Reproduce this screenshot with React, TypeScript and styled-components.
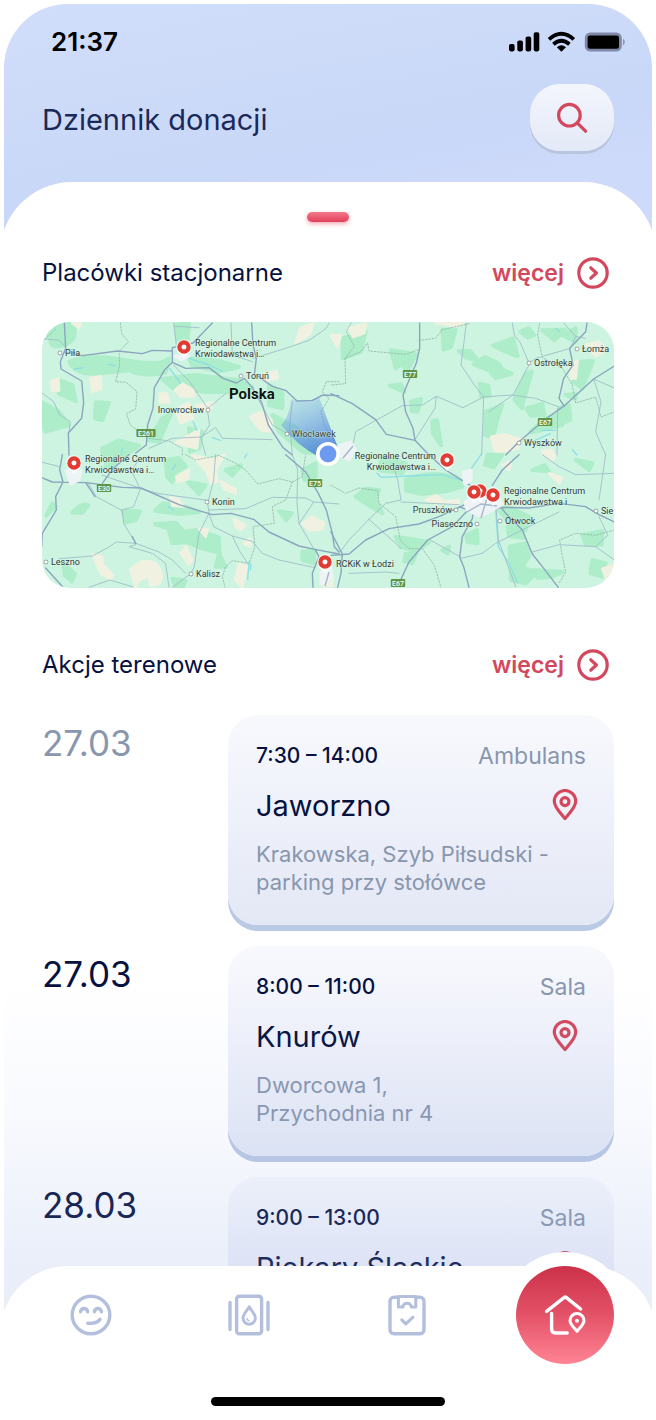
import React from "react";
import styled, { createGlobalStyle, css } from "styled-components";

const color = {
  navy: "#06113f",
  title: "#1a2958",
  muted: "#8896ae",
  red: "#d3485d",
  icon: "#b3bfdc",
};

const GlobalStyle = createGlobalStyle`
  *, *::before, *::after { box-sizing: border-box; }
  body {
    margin: 0;
    background: #fff;
    color: ${color.navy};
    font-family: Inter, "Open Sans", sans-serif;
  }
  h1, h2, h3, p, ul { margin: 0; padding: 0; font-weight: 400; }
  ul { list-style: none; }
  button { border: 0; padding: 0; font: inherit; cursor: pointer; background: none; }
  a { color: inherit; text-decoration: none; }
`;

const Frame = styled.div`
  position: relative;
  display: flex;
  flex-direction: column;
  height: calc(100vh - 4px);
  margin: 4px 4px 0;
  overflow: hidden;
  border-radius: 64px 64px 0 0;
  background: linear-gradient(170deg, #d0defb 0, #cddbf9 100px, #c9d7f8 210px, #cddafa 260px);
`;

const StatusBar = styled.div`
  display: flex;
  flex: none;
  align-items: center;
  justify-content: space-between;
  height: 76px;
  padding: 0 26px 0 47px;
`;

const Clock = styled.time`
  color: #000;
  font-size: 26px;
  font-weight: 600;
  line-height: 32px;
`;

const StatusIcons = styled.svg`
  display: block;
  width: 118px;
  height: 24px;
`;

const Header = styled.header`
  display: flex;
  flex: none;
  align-items: flex-start;
  justify-content: space-between;
  height: 102px;
  padding: 4px 38px 0;
`;

const PageTitle = styled.h1`
  color: ${color.title};
  font-size: 29px;
  line-height: 72px;
`;

const SearchButton = styled.button`
  display: grid;
  place-items: center;
  width: 84px;
  height: 67px;
  border-radius: 30px;
  background: linear-gradient(#f4f6fd, #e3e9f7);
  box-shadow: 0 3px 0 #b9c5de;
`;

const Sheet = styled.main`
  position: relative;
  flex: 1;
  min-height: 0;
  margin: 0 -4px;
  overflow: hidden;
  border-radius: 72px 72px 0 0;
  background: #fff;
`;

const Scroller = styled.div`
  display: flex;
  flex-direction: column;
  height: 100%;
  padding: 30px 42px 154px;
  overflow-y: auto;
  scrollbar-width: none;
`;

const Fade = styled.div`
  position: absolute;
  right: 0;
  bottom: 0;
  left: 0;
  height: 440px;
  pointer-events: none;
  background: linear-gradient(rgba(150, 175, 230, 0), rgba(150, 175, 230, 0.07) 32%, rgba(140, 165, 225, 0.19) 66%);
`;

const Handle = styled.div`
  flex: none;
  align-self: center;
  width: 42px;
  height: 10px;
  border-radius: 5px;
  background: linear-gradient(#f5788a, #e0405a);
  box-shadow: 0 2px 4px rgba(238, 90, 112, 0.5);
`;

const SectionHead = styled.div<{ $gap: number }>`
  display: flex;
  flex: none;
  align-items: center;
  justify-content: space-between;
  height: 36px;
  margin-top: ${({ $gap }) => $gap}px;
  padding-right: 5px;
`;

const SectionTitle = styled.h2`
  font-size: 24px;
  line-height: 36px;
`;

const MoreLink = styled.a`
  display: flex;
  gap: 13px;
  align-items: center;
  color: ${color.red};
  font-size: 23px;
  font-weight: 600;
  line-height: 36px;
`;

const MapCard = styled.div`
  flex: none;
  height: 266px;
  margin-top: 31px;
  overflow: hidden;
  border-radius: 28px;

  svg { display: block; width: 100%; height: 100%; }
`;

const Agenda = styled.ul`
  display: flex;
  flex-direction: column;
  gap: 21px;
  margin-top: 32px;
`;

const AgendaRow = styled.li`
  display: grid;
  grid-template-columns: 186px 1fr;
`;

const DateLabel = styled.time<{ $past?: boolean }>`
  color: ${({ $past }) => ($past ? color.muted : color.navy)};
  font-size: 35px;
  line-height: 56px;
`;

const Card = styled.article`
  height: 210px;
  padding: 27px 28px 0;
  border-radius: 30px;
  background: linear-gradient(#f8f9fd, #eef0fa 50%, #e3e8f5);
  box-shadow: 0 6px 0 #bac9e4;
`;

const CardRow = styled.div`
  display: flex;
  align-items: center;
  justify-content: space-between;
`;

const Hours = styled.span`
  font-size: 21px;
  font-weight: 500;
  line-height: 28px;
`;

const Kind = styled.span`
  color: ${color.muted};
  font-size: 23px;
  line-height: 28px;
`;

const Place = styled.h3`
  margin: 17px 0 15px;
  font-size: 29px;
  line-height: 38px;
`;

const PinButton = styled.button`
  display: grid;
  place-items: center;
  width: 42px;
  height: 38px;
`;

const Address = styled.p`
  color: ${color.muted};
  font-size: 22px;
  line-height: 28px;
  white-space: pre-line;
`;

const TabBar = styled.nav`
  position: absolute;
  right: -4px;
  bottom: 0;
  left: -4px;
  height: 154px;
  border-radius: 68px 68px 0 0;
  background: #fff;
`;

const Tabs = styled.ul`
  display: grid;
  grid-template-columns: repeat(4, 1fr);
  padding: 0 12px;
`;

const TabItem = styled.li`
  display: grid;
  place-items: center;
  height: 98px;
`;

const Tab = styled.button<{ $active?: boolean }>`
  display: grid;
  place-items: center;
  width: 98px;
  height: 98px;
  border-radius: 50%;
  color: ${color.icon};
  ${({ $active }) =>
    $active &&
    css`
      color: #fff;
      background: linear-gradient(#cb3148, #e45268 50%, #ff8493);
      box-shadow: 0 0 0 14px #fff;
    `}
`;

const HomeIndicator = styled.div`
  width: 234px;
  height: 9px;
  margin: 33px auto 0;
  border-radius: 5px;
  background: #000;
`;

const PhoneStatus = () => (
  <StatusIcons viewBox="0 0 118 24" aria-label="Zasięg, Wi-Fi, bateria" role="img">
    <rect x="1" y="14" width="5.6" height="7.4" rx="1.8" />
    <rect x="9.3" y="10.5" width="5.6" height="10.9" rx="1.8" />
    <rect x="17.6" y="6.4" width="5.6" height="15" rx="1.8" />
    <rect x="25.7" y="2.2" width="5.6" height="19.2" rx="1.8" />
    <g fill="none" stroke="#000" strokeWidth="3.8">
      <path d="M41 9.3 Q53.4 -1.7 65.8 9.3" />
      <path d="M45.4 14.2 Q53.4 7.4 61.4 14.2" />
    </g>
    <path d="M48.8 17.2 Q53.4 13.2 58 17.2 L53.4 21.8 Z" />
    <rect x="76.8" y="2.6" width="37" height="19" rx="5.4" fill="#7f88a6" />
    <rect x="79.6" y="5.4" width="31.4" height="13.4" rx="2.4" />
    <path d="M115.2 8.8 Q118.2 12 115.2 15.4 Z" fill="#7c85a3" />
  </StatusIcons>
);

const SearchIcon = () => (
  <svg width="34" height="34" viewBox="0 0 34 34" fill="none" stroke={color.red} strokeWidth="3.2" strokeLinecap="round" aria-hidden="true">
    <circle cx="14.4" cy="14.2" r="10.8" />
    <path d="M22.4 22.2 L30.6 30.2" />
  </svg>
);

const MoreIcon = () => (
  <svg width="32" height="32" viewBox="0 0 32 32" fill="none" stroke={color.red} strokeWidth="3.2" strokeLinecap="round" strokeLinejoin="round" aria-hidden="true">
    <circle cx="16" cy="16" r="14.2" />
    <path d="M13.8 10.8 L19.4 16 L13.8 21.2" />
  </svg>
);

const PinIcon = () => (
  <svg width="26" height="32" viewBox="0 0 26 32" fill="none" stroke={color.red} strokeWidth="3.2" strokeLinejoin="round" aria-hidden="true">
    <path d="M13 29.6 C9.4 25 2.3 18.4 2.3 12.2 A10.7 10.7 0 0 1 23.7 12.2 C23.7 18.4 16.6 25 13 29.6 Z" />
    <circle cx="13" cy="12.6" r="4" />
  </svg>
);

const tabIconProps = {
  width: 44,
  height: 44,
  viewBox: "0 0 44 44",
  fill: "none",
  stroke: "currentColor",
  strokeWidth: 3.4,
  strokeLinecap: "round" as const,
  strokeLinejoin: "round" as const,
  "aria-hidden": true,
};

const SmileIcon = () => (
  <svg {...tabIconProps}>
    <circle cx="22" cy="22" r="18.8" />
    <path d="M11.6 18.8 C11.6 14.4 18.6 14.4 18.6 18.8 M25.4 18.8 C25.4 14.4 32.4 14.4 32.4 18.8" />
    <path d="M18.8 30.2 C23.8 30.8 28.4 29.8 31 26.4" />
  </svg>
);

const DonationIcon = () => (
  <svg {...tabIconProps}>
    <rect x="9.6" y="3.2" width="25" height="37.6" rx="2.8" />
    <path d="M3 9.4 V36.6 M41 9.4 V36.6" />
    <path d="M22.2 13.8 C20.4 17 16 21 16 25 A6.2 6.2 0 0 0 28.4 25 C28.4 21 24 17 22.2 13.8 Z" strokeWidth="2.9" />
    <path d="M19.9 25.4 Q20.2 27.4 22 27.7" strokeWidth="1.4" />
  </svg>
);

const ChecklistIcon = () => (
  <svg {...tabIconProps}>
    <rect x="5" y="4.2" width="34" height="36.6" rx="4" />
    <path d="M13.4 3.4 H30.8 V14 H26.2 C26.2 9 18 9 18 14 H13.4 Z" fill="#fff" strokeWidth="3" />
    <path d="M16.8 26.8 L20.8 30.8 L28 24.2" strokeWidth="3.1" />
  </svg>
);

const HomePinIcon = () => (
  <svg {...tabIconProps}>
    <path d="M3.6 18.4 L21 4.6 Q22.2 3.6 23.4 4.6 L37.6 16" />
    <path d="M8.6 20.4 V36 Q8.6 40 12.6 40 H24.2" />
    <path d="M34 38.4 C32 35.6 27 31.8 27 27.6 A7 7 0 0 1 41 27.6 C41 31.8 36 35.6 34 38.4 Z" strokeWidth="3" />
    <circle cx="34" cy="27.8" r="2" fill="currentColor" stroke="none" />
  </svg>
);

/* The terrain is drawn in four tiles at three times the map's scale. */
type Tile = {
  at: [number, number];
  forest: string;
  sand: string;
  water?: string;
  border: string;
  minor: string;
  major: string;
};

const tiles: Tile[] = [
  {
    at: [-6, -21],
    forest:
      "M20 40 Q60 20 110 24 L104 70 Q80 100 40 92 Z M90 140 Q150 118 220 130 L300 142 Q370 150 390 130 L380 172 Q320 188 270 166 L170 176 Q110 180 90 140 Z M62 196 L100 210 L110 258 L60 236 Z M6 260 L60 290 L90 330 L20 350 L6 320 Z M170 262 L210 264 L190 316 L168 310 Z M410 30 L450 24 L444 96 L416 84 Z M370 192 L470 180 L550 190 L600 196 L640 216 L600 232 L500 230 L400 218 Z M450 130 L540 138 L600 156 L540 170 L460 152 Z M690 210 L730 230 L730 280 L690 270 Z M700 300 L760 330 L830 380 L870 420 L790 410 L720 350 Z M370 310 L396 296 L360 380 L330 376 Z M190 400 L240 376 L300 392 L262 420 L190 420 Z M450 340 L490 350 L480 400 L452 410 Z",
    sand:
      "M36 200 L58 192 L60 226 L40 228 Z M154 190 L184 184 L186 222 L160 230 Z M362 236 L384 236 L390 262 L364 262 Z M408 226 L430 206 L462 224 L466 244 L426 244 Z M410 284 L450 262 L462 310 L424 324 Z M470 272 L522 262 L510 290 Z M634 306 L668 290 L698 316 L692 350 L664 344 Z M670 180 L712 168 L716 190 L680 196 Z M784 40 L822 26 L814 56 L770 84 Z M410 384 L480 344 L474 400 Z M100 24 L126 24 L120 40 Z",
    water: "M106 162 L132 158 M208 148 L228 152 M392 160 L424 204 M450 130 L510 150 L550 168 M462 320 L474 346 M250 400 L246 420 M520 368 L544 376",
    border:
      "M244 24 L248 56 L268 80 L240 110 L242 150 L230 200 L262 202 L294 230 L290 282 L262 296 L274 330 L300 350 L330 370 L390 378 L430 400 L430 420 M900 200 L862 200 L850 230 L870 250 L846 290 L856 330 L894 390 M10 80 L50 42",
    minor:
      "M6 70 L60 76 L80 96 M6 232 L44 260 L62 300 L94 320 L90 350 M404 24 L412 90 M406 34 L480 38 M576 24 L580 120 L640 140 M404 150 L452 200 L506 280 M506 290 L512 330 L486 370 L500 420 M506 280 L560 236 M486 366 L400 370 L330 400 M486 366 L530 338 L550 370 L700 374 M642 130 L740 100 L810 76 L862 40 L870 24 M760 260 L752 330 L760 420 M640 220 L700 330 L745 356",
    major:
      "M76 24 L80 100 L64 140 L66 162 L128 198 L134 262 L128 310 L88 354 L90 420 M78 112 L130 122 L236 108 L310 116 L340 106 L398 108 M520 24 L462 84 L400 98 L400 142 L440 160 L510 158 L552 190 L592 204 L616 190 L640 218 L668 262 L688 330 L732 398 L760 420 M400 142 L376 166 L346 218 L342 280 L326 330 L322 390 L290 414 M638 24 L642 90 L652 130 L646 180 M652 180 L700 214 L740 226 L774 258 L820 256 L852 240 L900 242",
  },
  {
    at: [864, -21],
    forest:
      "M40 70 L110 50 L96 110 L42 130 Z M186 106 L262 118 L232 172 L220 146 L200 160 Z M340 44 L380 44 L366 96 L344 104 Z M390 108 L424 108 L446 136 L410 128 Z M434 148 L468 126 L510 146 L520 164 L548 176 L500 190 L480 166 Z M492 92 L552 70 L566 124 L530 110 Z M574 50 L598 40 L616 60 L596 68 Z M640 46 L710 44 L676 76 Z M452 206 L478 212 L482 242 L456 244 Z M590 176 L608 170 L578 280 L556 254 Z M182 212 L216 208 L226 230 Z M246 260 L276 252 L266 290 L248 288 Z M310 318 L324 316 L336 390 L312 356 Z M470 290 L520 270 L506 310 L492 366 L468 360 Z M592 280 L640 266 L646 300 L606 302 Z M604 350 L650 310 L714 290 L700 330 L610 352 Z M732 200 L748 140 L792 138 L760 220 Z M700 60 L740 40 L740 80 Z M710 240 L740 236 L740 252 Z M690 280 L720 270 L724 314 L690 330 Z",
    sand:
      "M6 62 L36 60 L26 96 Z M60 40 L110 26 L106 54 L72 66 Z M486 366 L524 358 L572 372 L568 400 L500 414 Z M770 90 L810 80 L834 104 L800 124 Z M722 150 L746 136 L740 190 L724 190 Z M320 24 L404 24 L380 34 Z M640 408 L670 404 L672 420 L640 420 Z",
    water: "M680 40 L692 50 M640 346 L680 346 M610 380 L664 356 M730 404 L744 420",
    border:
      "M270 76 L320 70 L340 44 L420 26 M268 104 L230 118 L120 108 L116 84 L96 110 L48 130 L50 206 L6 210 M48 130 L76 94 L52 50 L66 24 M632 26 L626 60 L640 128 L700 160 L730 210 L740 264 L800 246 L816 306 L858 290",
    minor:
      "M412 24 L404 90 L396 150 L436 210 L464 246 L548 240 L620 250 L690 276 M464 246 L458 420 M464 246 L402 278 L322 244 L280 270 L220 272 L80 350 L66 420 M322 244 L318 280 L258 374 M600 144 L620 130 L724 100 L740 64 M550 24 L556 60 L574 84 L600 144 M600 150 L552 240 L480 290 M740 64 L704 24 M740 64 L768 70 M794 192 L816 260 L800 350 L830 420 M794 192 L858 220 M686 280 L684 420",
    major:
      "M272 24 L272 100 L262 144 L238 200 L222 240 L230 290 L252 340 L258 376 L300 420 M6 236 L70 266 L140 314 L172 358 L258 376 M774 24 L770 50 L722 100 L732 150 L704 190 L690 250 L706 274 M858 152 L794 192 L706 272 L650 312 L570 380 L530 420",
  },
  {
    at: [-6, 384],
    forest:
      "M100 188 Q130 156 148 166 L130 188 Z M250 182 L304 184 L290 210 L260 218 Z M348 182 L372 160 L440 170 L480 186 L420 192 Z M348 222 L410 218 L436 246 L470 240 L540 262 L542 308 L490 296 L440 276 L400 280 L388 236 Z M380 30 L420 24 L440 50 L414 64 L400 96 L384 80 Z M446 96 L500 106 L480 132 Z M560 60 L606 46 L580 76 Z M22 196 L40 160 L50 170 Z M720 184 L758 190 L742 210 Z M790 60 L830 40 L830 80 L796 90 Z M790 306 L824 300 L826 340 L790 330 Z M72 340 L108 372 L98 394 L78 376 Z M400 386 L440 392 L430 412 L410 412 Z M206 20 L240 14 L224 58 L200 50 Z M540 312 L560 350 L530 350 Z",
    sand:
      "M160 312 L190 320 L190 340 L222 376 L214 388 L186 370 Z M274 360 Q310 320 350 340 Q380 370 360 402 L334 406 L330 380 L300 390 L290 412 Z M426 310 L440 290 L460 330 L450 344 Z M412 80 L450 60 L446 88 L416 96 Z M460 16 L530 30 L556 14 L530 60 L536 94 L516 100 L500 62 Z M546 94 L590 118 L590 130 L556 118 Z M480 236 L506 238 L500 260 Z M584 206 L620 226 L606 240 L590 230 Z M790 220 L820 200 L854 218 L850 238 L810 242 Z M600 340 L624 350 L610 410 L588 390 Z M394 140 L420 150 L434 170 L400 166 Z M850 370 L880 370 L880 408 L850 408 Z M614 280 L634 266 L634 290 Z",
    water: "M630 336 L626 388 M636 340 L634 360 M616 24 L624 12 M400 60 L410 44 M388 170 L402 180",
    border:
      "M440 14 L470 30 L540 16 L590 40 L620 60 L656 102 L720 86 L760 96 L740 150 L700 170 L706 220 L642 230 L648 290 L630 340 L580 332 L560 350 L550 380 L558 412 M760 96 L790 80 L800 14",
    minor:
      "M530 14 L524 90 L506 160 L510 190 M510 190 L480 250 L466 350 L456 370 L400 412 M510 190 L524 230 L580 258 L640 274 L670 310 L720 330 L824 352 M6 36 L62 50 M60 326 L160 318 L212 290 L232 276 L290 280 L360 306 L400 330 L440 370 M290 284 L270 290 L340 310 L380 340 L390 412 M146 96 L172 140 L250 182 L254 220 L290 280 M250 180 L284 170 L304 116 L356 130 L440 142 L500 150 M302 114 L276 60 L300 30 M302 114 L190 76 M510 180 L620 176 L700 142 L800 144 L824 156 L900 162 M760 14 L776 60 L774 160 L780 220 L824 296 M824 156 L780 222 M580 258 L600 300 L626 340 M150 412 L212 390 L280 410",
    major:
      "M70 14 L62 60 L72 96 L50 140 L52 180 L10 250 L8 290 M6 82 L40 96 L140 98 L250 112 L306 114 L420 164 L520 194 L576 190 L644 208 L690 246 L780 288 L828 298 L900 312 M140 98 L168 140 M270 14 L222 56 L190 100 M740 14 L800 66 L838 130 L862 180 L880 250 L886 290 L900 306 M828 298 L840 320 L820 370 L822 412 M280 260 L290 280 M20 354 L72 412",
  },
  {
    at: [864, 384],
    forest:
      "M230 90 Q290 60 380 80 L400 110 L350 124 L280 132 L232 122 Z M80 140 L110 116 L150 120 L140 150 L160 190 L110 160 Z M500 170 L540 170 L600 200 L590 240 L540 216 Z M536 230 L580 240 L584 264 L540 258 Z M542 290 L592 280 L600 320 L580 350 L620 370 L590 400 L546 390 Z M412 256 L444 240 L446 280 L416 276 Z M760 256 L820 244 L818 284 L770 284 Z M476 14 L520 14 L494 52 L468 44 Z M740 30 L790 40 L780 60 Z M612 360 L700 366 L670 380 L626 384 Z M790 330 L830 340 L820 380 L784 370 Z M160 20 L230 40 L220 70 L150 60 Z M200 260 L300 276 L260 304 L214 290 Z M230 312 L262 310 L250 340 L226 334 Z M610 60 L646 46 L660 64 Z M340 300 L360 290 L356 310 Z",
    sand:
      "M520 44 L546 34 L540 60 Z M290 150 L320 136 L340 150 L320 162 Z M820 356 L856 344 L856 380 L836 400 Z M660 70 L700 84 L690 100 Z M330 156 L390 150 L388 164 Z M640 14 L680 14 L672 30 Z",
    water: "M144 70 L156 82 L240 78 L340 74 L400 92 M424 60 L456 14 M500 180 L508 290 L540 340 L566 400",
    border:
      "M6 106 L50 130 L90 114 L146 122 L150 160 L200 200 L214 270 L240 296 L280 296 L316 346 L336 412 M856 240 L800 256 L740 250 L692 270 L700 320 L710 366 L690 400",
    minor:
      "M120 208 L170 160 L216 150 L206 90 L190 40 M120 208 L60 270 L30 310 M120 208 L200 280 L216 296 M216 156 L390 164 M460 310 L400 324 L300 268 M460 310 L500 280 L600 230 L690 186 M500 150 L508 270 L560 410 M640 14 L690 50 L740 74 L856 70 M610 306 L690 284 L800 290 L856 330 M800 290 L836 256 L810 200 M830 14 L810 150 M60 370 L170 366 L210 370",
    major:
      "M6 316 L60 312 L110 270 L180 236 L270 222 L330 200 L390 172 L436 150 M300 14 L350 60 L430 110 M570 14 L520 60 L490 106 M436 160 L370 230 L296 270 L240 336 L210 400 M434 176 L430 206 L400 260 L392 322 L404 350 L420 412 M500 150 L530 190 L580 240 L610 312 L640 350 L688 412 M390 170 L440 190 L520 172 L600 174 L690 160 L770 170 L810 194 L856 216 M6 246 L40 312 L36 370 L26 412",
  },
];

type Town = { x: number; y: number; name: string; side?: "left" };

const towns: Town[] = [
  { x: 19, y: 31, name: "Piła" },
  { x: 200, y: 54, name: "Toruń" },
  { x: 167, y: 88, name: "Inowrocław", side: "left" },
  { x: 246, y: 112, name: "Włocławek" },
  { x: 536, y: 27, name: "Łomża" },
  { x: 488, y: 41, name: "Ostrołęka" },
  { x: 478, y: 121, name: "Wyszków" },
  { x: 166, y: 180, name: "Konin" },
  { x: 5, y: 240, name: "Leszno" },
  { x: 150, y: 252, name: "Kalisz" },
  { x: 415, y: 188, name: "Pruszków", side: "left" },
  { x: 436, y: 202, name: "Piaseczno", side: "left" },
  { x: 459, y: 199, name: "Otwock" },
  { x: 555, y: 189, name: "Sie" },
];

type Centre = { x: number; y: number; lines: string[]; side?: "left" };

const centres: Centre[] = [
  { x: 143, y: 25, lines: ["Regionalne Centrum", "Krwiodawstwa i…"] },
  { x: 33, y: 141, lines: ["Regionalne Centrum", "Krwiodawstwa i…"] },
  { x: 406, y: 138, lines: ["Regionalne Centrum", "Krwiodawstwa i…"], side: "left" },
  { x: 439, y: 169, lines: [] },
  { x: 433, y: 170, lines: [] },
  { x: 452, y: 173, lines: ["Regionalne Centrum", "Krwiodawstwa i"] },
  { x: 284, y: 240, lines: ["RCKiK w Łodzi"] },
];

const routes = [
  { x: 105, y: 111, name: "E261" },
  { x: 63, y: 166, name: "E30" },
  { x: 274, y: 161, name: "E75" },
  { x: 369, y: 52, name: "E77" },
  { x: 504, y: 100, name: "E67" },
  { x: 357, y: 261, name: "E67" },
];

const MapLabels = styled.g`
  fill: #2f3937;
  stroke: rgba(227, 248, 236, 0.7);
  stroke-width: 1px;
  paint-order: stroke;
  font-family: Roboto, sans-serif;
  font-size: 9px;
`;

const RouteText = styled.text`
  fill: #fff;
  font-family: Roboto, sans-serif;
  font-size: 7px;
  font-weight: 500;
`;

const CountryText = styled.text`
  fill: #0c1512;
  stroke: rgba(227, 248, 236, 0.7);
  stroke-width: 1px;
  paint-order: stroke;
  font-family: Roboto, sans-serif;
  font-size: 15px;
  font-weight: 700;
`;

const RegionMap = () => (
  <svg viewBox="0 0 574 266" preserveAspectRatio="xMidYMid slice" role="img" aria-label="Mapa placówek">
    <defs>
      <linearGradient id="beam" x1="0.3" y1="0" x2="0.7" y2="1">
        <stop offset="0" stopColor="#6f9df0" stopOpacity="0.2" />
        <stop offset="1" stopColor="#3f74dc" stopOpacity="0.85" />
      </linearGradient>
    </defs>
    <rect width="574" height="266" fill="#ccf4e0" />
    <g transform="scale(0.33333)" fill="none" strokeLinejoin="round" strokeLinecap="round">
      {tiles.map((t, i) => (
        <g key={i} transform={`translate(${t.at[0]} ${t.at[1]})`}>
          <path d={t.forest} fill="#adedca" stroke="#adedca" strokeWidth="12" />
          <path d={t.sand} fill="#f1f1e1" stroke="#f1f1e1" strokeWidth="8" />
          <path d={t.water} stroke="#8ddfe6" strokeWidth="4" />
        </g>
      ))}
      {tiles.map((t, i) => (
        <g key={i} transform={`translate(${t.at[0]} ${t.at[1]})`}>
          <path d={t.border} stroke="#8fb7a4" strokeWidth="2.4" strokeDasharray="5 5" />
          <path d={t.minor} stroke="#a3bfca" strokeWidth="2.8" />
          <path d={t.major} stroke="#8ca5bf" strokeWidth="4.2" />
        </g>
      ))}
    </g>
    <g fill="#eef3f6" stroke="#eef3f6" strokeWidth="3" strokeLinejoin="round">
      <path d="M25 149 L40 148 L38 158 L30 162 Z" />
      <path d="M424 180 L438 172 L458 176 L462 182 L448 190 L438 194 L426 188 Z" />
      <path d="M422 150 L430 148 L430 158 L424 162 Z" />
      <path d="M298 124 L310 120 L314 128 L308 138 L300 134 Z" />
      <path d="M280 250 L290 246 L290 256 L280 262 Z" />
      <path d="M134 34 L148 34 L140 38 Z" />
    </g>
    <path d="M426 190 L440 182 L456 184 M440 196 L446 176 M302 136 L312 124 M284 264 L288 250" fill="none" stroke="#a7b7cc" strokeWidth="1.4" />
    <path d="M250 77 Q264 82 278 75 L297 126 L280 136 Q256 124 240 103 Q248 96 250 77 Z" fill="url(#beam)" />

    {routes.map((r, i) => (
      <g key={i}>
        <rect x={r.x - r.name.length * 2.4} y={r.y - 4} width={r.name.length * 4.8} height="8" rx="1" fill="#5d9646" />
        <RouteText x={r.x} y={r.y + 2.6} textAnchor="middle">{r.name}</RouteText>
      </g>
    ))}

    <MapLabels>
      {towns.map((t) => (
        <g key={t.name}>
          <circle cx={t.x} cy={t.y} r="1.8" fill="#fff" stroke="#4d5957" strokeWidth="1" />
          <text x={t.side ? t.x - 4 : t.x + 5} y={t.y + 3} textAnchor={t.side ? "end" : "start"}>{t.name}</text>
        </g>
      ))}
      {centres.map((c, i) =>
        c.lines.map((line, n) => (
          <text
            key={`${i}-${n}`}
            x={c.side ? c.x - 11 : c.x + 11}
            y={c.lines.length > 1 ? c.y - 1 + n * 11 : c.y + 5}
            textAnchor={c.side ? "end" : "start"}
          >
            {line}
          </text>
        )),
      )}
    </MapLabels>
    <CountryText x="188" y="77">Polska</CountryText>

    {centres.map((c, i) => (
      <g key={i}>
        <path d={`M${c.x - 7} ${c.y + 4} L${c.x} ${c.y + 11} L${c.x + 7} ${c.y + 4} Z`} fill="#fff" opacity="0.8" />
        <circle cx={c.x} cy={c.y} r="7.8" fill="#fff" opacity="0.8" />
        <circle cx={c.x} cy={c.y} r="4.6" fill="#fff" stroke="#e13c34" strokeWidth="4.2" />
      </g>
    ))}
    <circle cx="287" cy="132" r="12" fill="#fff" />
    <circle cx="287" cy="132" r="8.4" fill="#6b9af0" />
  </svg>
);

const events = [
  { date: "27.03", past: true, hours: "7:30 – 14:00", kind: "Ambulans", place: "Jaworzno", address: "Krakowska, Szyb Piłsudski -\nparking przy stołówce" },
  { date: "27.03", past: false, hours: "8:00 – 11:00", kind: "Sala", place: "Knurów", address: "Dworcowa 1,\nPrzychodnia nr 4" },
  { date: "28.03", past: false, hours: "9:00 – 13:00", kind: "Sala", place: "Piekary Śląskie", address: "" },
];

const tabs = [
  { label: "Samopoczucie", Icon: SmileIcon },
  { label: "Donacje", Icon: DonationIcon },
  { label: "Kwestionariusz", Icon: ChecklistIcon },
  { label: "Placówki", Icon: HomePinIcon, active: true },
];

export default function App() {
  return (
    <>
      <GlobalStyle />
      <Frame>
        <StatusBar>
          <Clock>21:37</Clock>
          <PhoneStatus />
        </StatusBar>
        <Header>
          <PageTitle>Dziennik donacji</PageTitle>
          <SearchButton type="button" aria-label="Szukaj">
            <SearchIcon />
          </SearchButton>
        </Header>
        <Sheet>
          <Scroller>
            <Handle />
            <SectionHead $gap={33}>
              <SectionTitle>Placówki stacjonarne</SectionTitle>
              <MoreLink href="#placowki">
                więcej
                <MoreIcon />
              </MoreLink>
            </SectionHead>
            <MapCard>
              <RegionMap />
            </MapCard>
            <SectionHead $gap={59}>
              <SectionTitle>Akcje terenowe</SectionTitle>
              <MoreLink href="#akcje">
                więcej
                <MoreIcon />
              </MoreLink>
            </SectionHead>
            <Agenda>
              {events.map((e) => (
                <AgendaRow key={e.place}>
                  <DateLabel $past={e.past}>{e.date}</DateLabel>
                  <Card>
                    <CardRow>
                      <Hours>{e.hours}</Hours>
                      <Kind>{e.kind}</Kind>
                    </CardRow>
                    <CardRow>
                      <Place>{e.place}</Place>
                      <PinButton type="button" aria-label={`Pokaż na mapie: ${e.place}`}>
                        <PinIcon />
                      </PinButton>
                    </CardRow>
                    <Address>{e.address}</Address>
                  </Card>
                </AgendaRow>
              ))}
            </Agenda>
          </Scroller>
          <Fade />
        </Sheet>
        <TabBar aria-label="Nawigacja">
          <Tabs>
            {tabs.map(({ label, Icon, active }) => (
              <TabItem key={label}>
                <Tab type="button" $active={active} aria-label={label}>
                  <Icon />
                </Tab>
              </TabItem>
            ))}
          </Tabs>
          <HomeIndicator />
        </TabBar>
      </Frame>
    </>
  );
}
